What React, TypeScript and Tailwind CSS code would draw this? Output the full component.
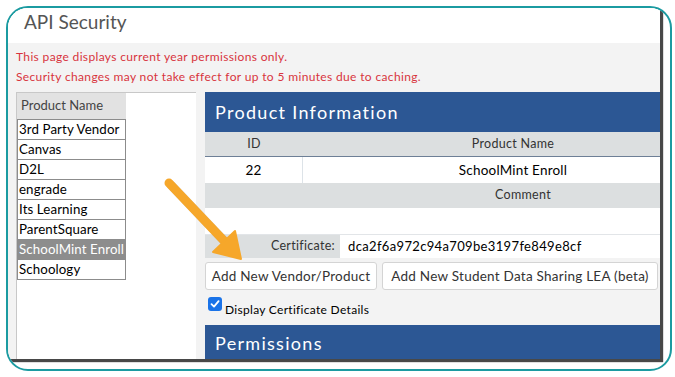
import React from 'react'

const products = [
  '3rd Party Vendor',
  'Canvas',
  'D2L',
  'engrade',
  'Its Learning',
  'ParentSquare',
  'SchoolMint Enroll',
  'Schoology',
]

function Arrow() {
  return (
    <svg className="absolute left-0 top-0 pointer-events-none" width="675" height="377">
      <g opacity="0.25" transform="translate(2,2)">
        <line x1="169" y1="183" x2="228" y2="245" stroke="#555" strokeWidth="9" strokeLinecap="round" />
      </g>
      <line x1="169" y1="183" x2="228" y2="245" stroke="#f6a72a" strokeWidth="9" strokeLinecap="round" />
      <polygon points="241,259 213,252 235,231" fill="#f6a72a" stroke="#f6a72a" strokeWidth="2" strokeLinejoin="round" />
    </svg>
  )
}

export default function App() {
  return (
    <div className="relative w-[675px] h-[377px] bg-white overflow-hidden font-['Lato','Open_Sans',sans-serif]">
      <div className="ml-[6px] mt-[6px] w-[666px] h-[365px] border-2 border-[#1b9ba1] rounded-[22px] overflow-hidden bg-white">
        <div className="w-[652px] h-[351px] bg-[#f3f3f3] flex flex-col overflow-hidden shadow-[3px_3px_1px_rgba(40,40,40,0.85)]">
          {/* title */}
          <div className="h-[35px] shrink-0 bg-white pl-[16px] flex items-center">
            <span className="text-[19px] text-[#555] -mt-[6px]">API Security</span>
          </div>

          {/* notices */}
          <div className="shrink-0 pt-[4px] pl-[8px] text-[12px] tracking-[0.35px] leading-[20px] text-[#d8333d]">
            <div>This page displays current year permissions only.</div>
            <div>Security changes may not take effect for up to 5 minutes due to caching.</div>
          </div>

          <div className="flex flex-1 mt-[5px] pl-[8px] gap-[9px] min-h-0">
            {/* product list */}
            <div className="w-[180px] shrink-0 bg-white border-t border-l border-[#c8c8c8]">
              <div className="w-[109px] h-[26px] bg-[#e2e2e2] text-[13px] text-[#444] pl-[4px] flex items-center">
                Product Name
              </div>
              <div className="w-[109px] border-t border-[#8c8c8c]">
                {products.map((p) => (
                  <div
                    key={p}
                    className={
                      p === 'SchoolMint Enroll'
                        ? 'h-[20px] border-x border-b border-[#8c8c8c] bg-[#8d8d8d] text-white text-[13.3px] tracking-[0.1px] pl-[1px] flex items-center whitespace-nowrap overflow-hidden'
                        : 'h-[20px] border-x border-b border-[#8c8c8c] bg-white text-black text-[13.3px] tracking-[0.1px] pl-[1px] flex items-center whitespace-nowrap overflow-hidden'
                    }
                  >
                    {p}
                  </div>
                ))}
              </div>
            </div>

            {/* product information */}
            <div className="flex-1 min-w-0 flex flex-col overflow-hidden">
              <div className="h-[40px] shrink-0 bg-[#2c5794] text-white text-[18px] tracking-[1.3px] pl-[10px] flex items-center">
                Product Information
              </div>
              <div className="flex shrink-0 w-[560px] h-[25px] bg-[#dcdfe0] text-[12.5px] tracking-[0.3px] text-[#333] border-b border-[#6d7f96]">
                <div className="w-[98px] flex items-center justify-center">ID</div>
                <div className="w-[420px] flex items-center justify-center">Product Name</div>
              </div>
              <div className="flex shrink-0 w-[560px] h-[26px] bg-white text-[13.5px] tracking-[0.2px] text-black">
                <div className="w-[98px] flex items-center justify-center border-r border-[#dde3e8]">22</div>
                <div className="w-[420px] flex items-center justify-center">SchoolMint Enroll</div>
              </div>
              <div className="h-[25px] shrink-0 bg-[#dcdfe0] text-[12.5px] tracking-[0.3px] text-[#333] flex items-center pl-[290px]">
                Comment
              </div>
              <div className="h-[27px] shrink-0 bg-white border-b border-[#e2e5e8]" />
              <div className="flex shrink-0 h-[23px]">
                <div className="w-[135px] bg-[#dcdfe0] text-[#333] text-[12.5px] tracking-[0.3px] flex items-center justify-end pr-[5px]">
                  Certificate:
                </div>
                <div className="flex-1 bg-white text-black text-[13px] tracking-[0.35px] flex items-center pl-[8px]">
                  dca2f6a972c94a709be3197fe849e8cf
                </div>
              </div>
              <div className="flex shrink-0 gap-[5px] mt-[4px] h-[28px]">
                <button className="w-[172px] bg-white border border-[#d4d4d4] rounded-[3px] text-[13.5px] tracking-[0.25px] text-[#333]">
                  Add New Vendor/Product
                </button>
                <button className="w-[276px] bg-white border border-[#d4d4d4] rounded-[3px] text-[13.5px] tracking-[0.25px] text-[#333]">
                  Add New Student Data Sharing LEA (beta)
                </button>
              </div>
              <div className="flex shrink-0 items-start mt-[7px] pl-[3px] h-[28px]">
                <span className="w-[14px] h-[14px] rounded-[3px] bg-[#1a73e8] flex items-center justify-center">
                  <svg width="10" height="10" viewBox="0 0 10 10">
                    <path d="M1.5 5.2 L4 7.6 L8.6 2.2" fill="none" stroke="white" strokeWidth="1.8" strokeLinecap="round" strokeLinejoin="round" />
                  </svg>
                </span>
                <span className="text-[12px] tracking-[0.3px] text-black ml-[3px] mt-[6px] leading-[14px]">Display Certificate Details</span>
              </div>
              <div className="h-[40px] shrink-0 bg-[#2c5794] text-white text-[18px] tracking-[1.3px] pl-[10px] pb-[4px] flex items-center">
                Permissions
              </div>
            </div>
          </div>
        </div>
      </div>
      <Arrow />
    </div>
  )
}
